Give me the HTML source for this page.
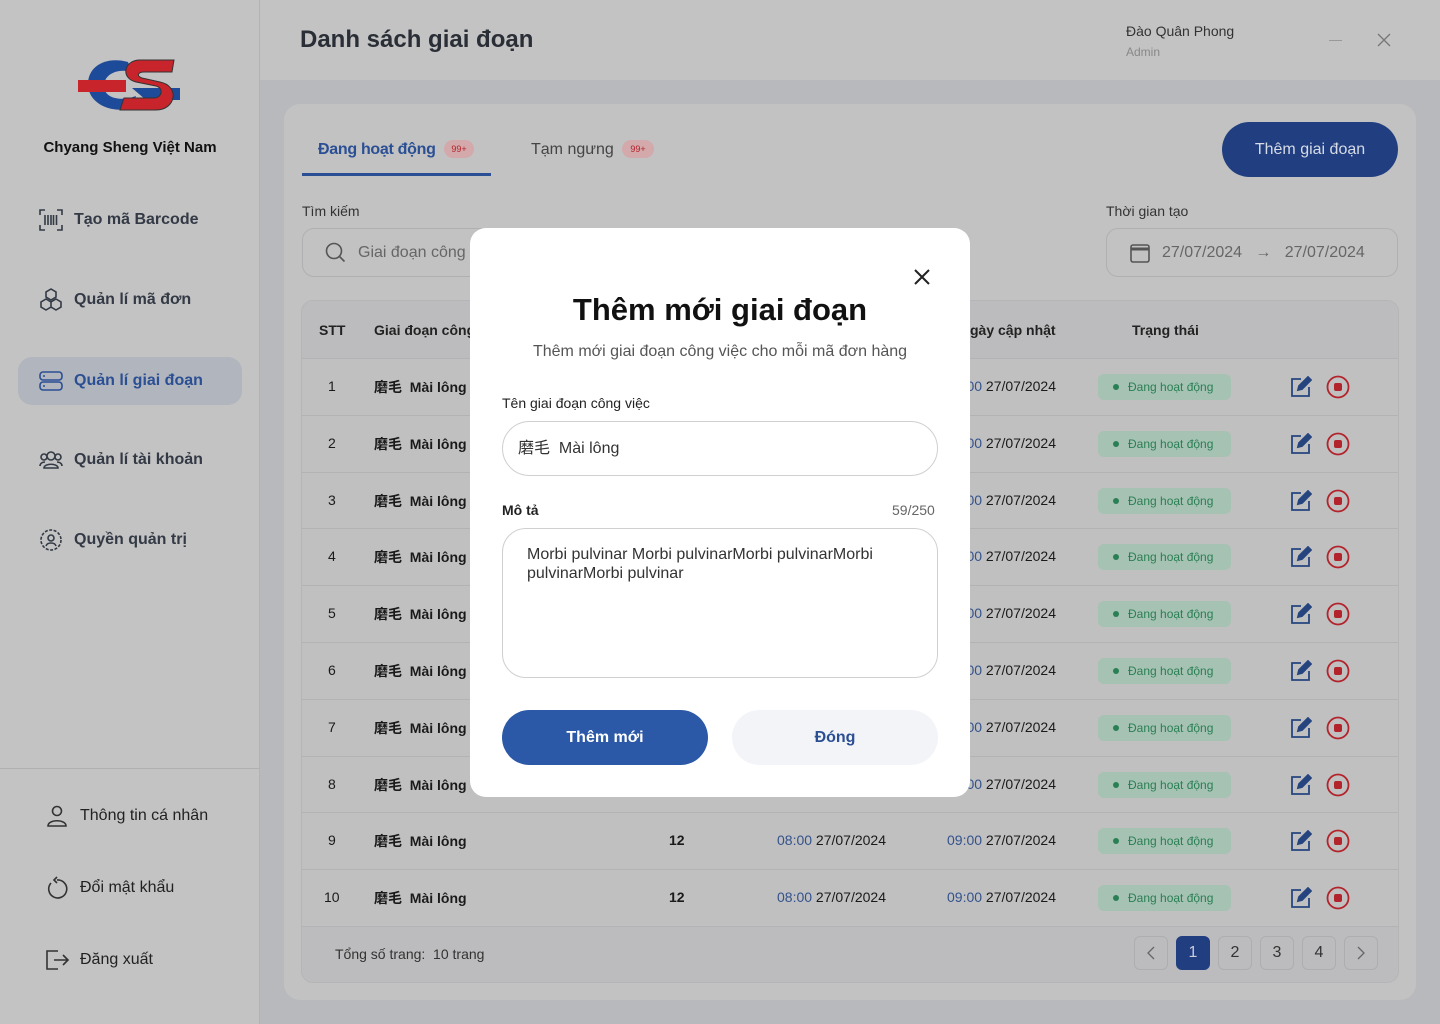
<!DOCTYPE html>
<html><head><meta charset="utf-8"><style>
*{box-sizing:border-box;margin:0;padding:0}
body{width:1440px;height:1024px;position:relative;overflow:hidden;font-family:"Liberation Sans","Noto Sans CJK SC",sans-serif;background:#b8b9bd;color:#1a1a1a}
.a{position:absolute}
.side{left:0;top:0;width:260px;height:1024px;background:#c3c3c3;border-right:1px solid #b3b3b3}
.nav{left:18px;width:224px;height:48px;display:flex;align-items:center;padding-left:20px;font-size:16px;font-weight:bold;color:#333a45;gap:10px}
.nav svg{width:26px;height:26px}
.top{left:260px;top:0;width:1180px;height:80px;background:#c3c3c3}
.card{left:284px;top:104px;width:1132px;height:896px;background:#c2c2c3;border-radius:16px}
.tbl{left:301px;top:300px;width:1098px;height:683px;background:#c0c0c1;border:1px solid #b5b5b7;border-radius:12px;overflow:hidden}
.row{position:absolute;left:0;width:1098px;height:57px;border-top:1px solid #b3b3b5;font-size:14px}
.row span{position:absolute;top:19px}
.badge{position:absolute;left:796px;top:15px;width:133px;height:26px;background:#a6c2b3;border-radius:6px;color:#2a7f55;font-size:12px;line-height:26px;padding-left:30px}
.badge:before{content:"";position:absolute;left:15px;top:10px;width:6px;height:6px;border-radius:50%;background:#2a7f55}
.blue{color:#34528c}
.pg{top:936px;width:34px;height:34px;border:1px solid #aeaeb0;border-radius:6px;text-align:center;line-height:32px;font-size:16px;color:#333}
.modal{left:470px;top:228px;width:500px;height:569px;background:#fff;border-radius:16px}
</style></head><body>
<div class="a side">
 <svg class="a" style="left:76px;top:56px" width="106" height="60" viewBox="0 0 106 60">
  <path d="M52 6 C30 0 12 10 12 28 C12 48 36 58 56 52 L60 40 C44 46 28 42 28 30 C28 18 42 12 56 16 Z" fill="#1e4a9a"/>
  <path d="M56 32 L104 32 L104 44 L70 44 Z" fill="#1e4a9a"/>
  <rect x="2" y="24" width="48" height="12" fill="#c8242c"/>
  <path d="M98 4 L64 4 C48 4 44 22 60 26 L80 30 C88 32 86 42 78 42 L48 42 L44 54 L80 54 C100 54 104 30 84 26 L66 22 C60 20 62 16 68 16 L96 16 Z" fill="#c8242c" stroke="#333" stroke-width="1"/>
 </svg>
 <div class="a" style="left:0;width:260px;top:139px;text-align:center;font-weight:bold;font-size:15px;color:#111">Chyang Sheng Việt Nam</div>
 <div class="a nav" style="top:196px"><svg viewBox="0 0 26 26" fill="none" stroke="#333a45" stroke-width="1.6"><path d="M2 8V3h5M19 3h5v5M24 18v5h-5M7 23H2v-5"/><path d="M7 8v10M10 8v10M13 8v10M15.5 8v10M18.5 8v10"/></svg>Tạo mã Barcode</div>
 <div class="a nav" style="top:276px"><svg viewBox="0 0 26 26" fill="none" stroke="#333a45" stroke-width="1.6"><path d="M13 2l5 3v5l-5 3-5-3V5z M8 12l5 3v5l-5 3-5-3v-5z M18 12l5 3v5l-5 3-5-3v-5z"/></svg>Quản lí mã đơn</div>
 <div class="a nav" style="top:357px;background:#b1b5bd;border-radius:14px;color:#2b4f94"><svg viewBox="0 0 26 26" fill="none" stroke="#2b4f94" stroke-width="1.6"><rect x="2" y="4" width="22" height="8" rx="3"/><rect x="2" y="14" width="22" height="8" rx="3"/><path d="M5 8h2M5 18h2"/></svg>Quản lí giai đoạn</div>
 <div class="a nav" style="top:436px"><svg viewBox="0 0 26 26" fill="none" stroke="#333a45" stroke-width="1.6"><circle cx="13" cy="9" r="4"/><circle cx="6" cy="10" r="3"/><circle cx="20" cy="10" r="3"/><path d="M6 21c0-5 14-5 14 0zM2 19c0-3 3-4 5-4M24 19c0-3-3-4-5-4"/></svg>Quản lí tài khoản</div>
 <div class="a nav" style="top:516px"><svg viewBox="0 0 26 26" fill="none" stroke="#333a45" stroke-width="1.6"><circle cx="13" cy="13" r="10" stroke-dasharray="3 1.5"/><circle cx="13" cy="11" r="3"/><path d="M8 19c1-4 9-4 10 0"/></svg>Quyền quản trị</div>
 <div class="a" style="left:0;top:768px;width:260px;border-top:1px solid #b0b0b0"></div>
 <div class="a nav" style="top:792px;padding-left:26px;font-weight:normal;color:#222"><svg viewBox="0 0 26 26" fill="none" stroke="#333" stroke-width="1.6"><circle cx="13" cy="8" r="4.5"/><path d="M4 23c0-7 18-7 18 0z"/></svg>Thông tin cá nhân</div>
 <div class="a nav" style="top:864px;padding-left:26px;font-weight:normal;color:#222"><svg viewBox="0 0 26 26" fill="none" stroke="#333" stroke-width="1.6"><path d="M7 8a9 9 0 1 0 6-3"/><path d="M13 2l-3 3 3 3"/></svg>Đổi mật khẩu</div>
 <div class="a nav" style="top:936px;padding-left:26px;font-weight:normal;color:#222"><svg viewBox="0 0 26 26" fill="none" stroke="#333" stroke-width="1.6"><path d="M14 4H3v18h11M10 13h14M19 8l5 5-5 5"/></svg>Đăng xuất</div>
</div>
<div class="a top">
 <div class="a" style="left:40px;top:26px;font-size:24px;font-weight:bold;color:#2a2e36">Danh sách giai đoạn</div>
 <div class="a" style="left:866px;top:23px;font-size:14px;color:#333">Đào Quân Phong</div>
 <div class="a" style="left:866px;top:45px;font-size:12px;color:#888">Admin</div>
 <div class="a" style="left:1069px;top:40px;width:13px;border-top:1.5px solid #999"></div>
 <svg class="a" style="left:1117px;top:33px" width="14" height="14" viewBox="0 0 14 14" stroke="#777" stroke-width="1.3"><path d="M1 1l12 12M13 1L1 13"/></svg>
</div>
<div class="a card"></div>
<div class="a" style="left:318px;top:141px;font-size:16px;color:#2b4f94;font-weight:bold;letter-spacing:-0.3px">Đang hoạt động</div>
<div class="a" style="left:444px;top:140px;width:30px;height:18px;border-radius:9px;background:#d3a9ab;color:#b3232b;font-size:9px;text-align:center;line-height:18px">99+</div>
<div class="a" style="left:302px;top:173px;width:189px;height:3px;background:#2b4f94"></div>
<div class="a" style="left:531px;top:141px;font-size:16px;color:#444">Tạm ngưng</div>
<div class="a" style="left:622px;top:140px;width:32px;height:18px;border-radius:9px;background:#d3a9ab;color:#b3232b;font-size:9px;text-align:center;line-height:18px">99+</div>
<div class="a" style="left:1222px;top:122px;width:176px;height:55px;border-radius:28px;background:#213f80;color:#d6dbe6;font-size:16px;text-align:center;line-height:55px">Thêm giai đoạn</div>
<div class="a" style="left:302px;top:203px;font-size:14px;color:#333">Tìm kiếm</div>
<div class="a" style="left:302px;top:228px;width:300px;height:49px;border:1px solid #b0b0b2;border-radius:12px"></div>
<svg class="a" style="left:324px;top:241px" width="24" height="24" viewBox="0 0 24 24" fill="none" stroke="#555" stroke-width="1.6"><circle cx="10" cy="10" r="7.5"/><path d="M15.5 15.5l5 5"/></svg>
<div class="a" style="left:358px;top:244px;font-size:16px;color:#666">Giai đoạn công</div>
<div class="a" style="left:1106px;top:203px;font-size:14px;color:#333">Thời gian tạo</div>
<div class="a" style="left:1106px;top:228px;width:292px;height:49px;border:1px solid #b0b0b2;border-radius:12px"></div>
<svg class="a" style="left:1129px;top:242px" width="22" height="22" viewBox="0 0 22 22" fill="none" stroke="#555" stroke-width="1.6"><rect x="2" y="3" width="18" height="17" rx="2"/><path d="M2 7h18" stroke-width="3"/></svg>
<div class="a" style="left:1162px;top:244px;font-size:16px;color:#666">27/07/2024 &nbsp;&nbsp;→&nbsp;&nbsp; 27/07/2024</div>
<div class="a tbl">
 <div style="position:absolute;left:0;top:0;width:1098px;height:57px;background:#bcbcbe;font-size:14px;font-weight:bold;color:#222">
  <span class="a" style="left:17px;top:21px">STT</span><span class="a" style="left:72px;top:21px">Giai đoạn công</span><span class="a" style="left:668px;top:21px">gày cập nhật</span><span class="a" style="left:830px;top:21px">Trạng thái</span>
 </div>
 <div id="rows"></div>
 <div style="position:absolute;left:0;top:625px;width:1098px;height:58px;border-top:1px solid #b3b3b5;background:#bcbcbe"></div>
 <span class="a" style="left:33px;top:645px;font-size:14px;color:#333">Tổng số trang: &nbsp;10 trang</span>
</div>
<div class="a pg" style="left:1134px"><svg width="12" height="14" viewBox="0 0 12 14" style="margin-top:9px" fill="none" stroke="#666" stroke-width="1.3"><path d="M9 1L3 7l6 6"/></svg></div>
<div class="a pg" style="left:1176px;background:#213f80;border-color:#213f80;color:#ccd">1</div>
<div class="a pg" style="left:1218px">2</div>
<div class="a pg" style="left:1260px">3</div>
<div class="a pg" style="left:1302px">4</div>
<div class="a pg" style="left:1344px"><svg width="12" height="14" viewBox="0 0 12 14" style="margin-top:9px" fill="none" stroke="#666" stroke-width="1.3"><path d="M3 1l6 6-6 6"/></svg></div>
<div class="a modal">
 <svg class="a" style="left:444px;top:41px" width="16" height="16" viewBox="0 0 16 16" stroke="#222" stroke-width="2"><path d="M1 1l14 14M15 1L1 15"/></svg>
 <div class="a" style="left:0;width:500px;top:64px;text-align:center;font-size:31px;font-weight:bold;color:#111">Thêm mới giai đoạn</div>
 <div class="a" style="left:0;width:500px;top:115px;text-align:center;font-size:16px;color:#555">Thêm mới giai đoạn công việc cho mỗi mã đơn hàng</div>
 <div class="a" style="left:32px;top:167px;font-size:14px;color:#222">Tên giai đoạn công việc</div>
 <div class="a" style="left:32px;top:193px;width:436px;height:55px;border:1px solid #d0d0d0;border-radius:28px;padding:0 15px;line-height:53px;font-size:16px;color:#333">磨毛&nbsp; Mài lông</div>
 <div class="a" style="left:32px;top:274px;font-size:14px;color:#222;font-weight:bold">Mô tả</div>
 <div class="a" style="left:422px;top:274px;font-size:14px;color:#666">59/250</div>
 <div class="a" style="left:32px;top:300px;width:436px;height:150px;border:1px solid #d0d0d0;border-radius:24px;padding:16px 24px;font-size:16px;line-height:19px;color:#333">Morbi pulvinar Morbi pulvinarMorbi pulvinarMorbi pulvinarMorbi pulvinar</div>
 <div class="a" style="left:32px;top:482px;width:206px;height:55px;border-radius:28px;background:#2b59a8;color:#fff;font-size:16px;text-align:center;line-height:55px;font-weight:bold">Thêm mới</div>
 <div class="a" style="left:262px;top:482px;width:206px;height:55px;border-radius:28px;background:#f2f4f7;color:#2b4f94;font-size:16px;text-align:center;line-height:55px;font-weight:bold">Đóng</div>
</div>
<script>
var h='';for(var i=0;i<10;i++){var t=57+i*56.8;h+='<div class="row" style="top:'+t+'px"><span style="left:'+(i==9?22:26)+'px">'+(i+1)+'</span><span style="left:72px;font-weight:bold;top:18px">磨毛&nbsp; Mài lông</span><span style="left:367px;font-weight:bold">12</span><span style="left:475px"><b class="blue" style="font-weight:normal">08:00</b> 27/07/2024</span><span style="left:645px"><b class="blue" style="font-weight:normal">09:00</b> 27/07/2024</span><div class="badge">Đang hoạt động</div><svg style="position:absolute;left:988px;top:17px" width="22" height="22" viewBox="0 0 22 22" fill="none" stroke="#26457f" stroke-width="1.8"><path d="M11 3H2v17h17v-9"/><path d="M8 14l1-4 9-9 3 3-9 9z" fill="#26457f"/></svg><svg style="position:absolute;left:1024px;top:16px" width="24" height="24" viewBox="0 0 24 24"><circle cx="12" cy="12" r="10.5" fill="none" stroke="#b3232b" stroke-width="1.8"/><rect x="8" y="8" width="8" height="8" rx="2" fill="#b3232b"/></svg></div>';}
document.getElementById('rows').innerHTML=h;
</script>
</body></html>
